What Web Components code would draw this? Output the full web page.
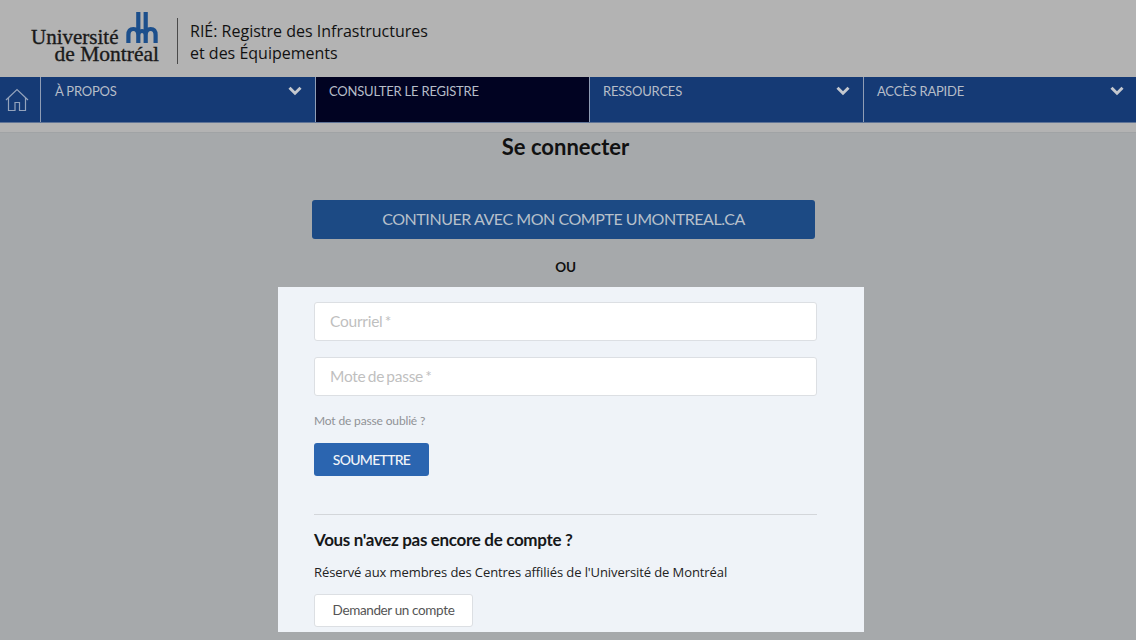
<!DOCTYPE html>
<html lang="fr">
<head>
<meta charset="utf-8">
<title>Se connecter</title>
<style>
    html, body { margin: 0; padding: 0; height: 640px; overflow: hidden; background: #a6a9ab; }
    body { font-family: "Lato", sans-serif; display: flex; flex-direction: column; }
</style>
</head>
<body>
<site-header></site-header>
<site-nav>
    <nav-item label="À PROPOS" caret></nav-item>
    <nav-item label="CONSULTER LE REGISTRE" active></nav-item>
    <nav-item label="RESSOURCES" caret></nav-item>
    <nav-item label="ACCÈS RAPIDE" caret></nav-item>
</site-nav>
<login-panel>
    <text-field label="Courriel *"></text-field>
    <text-field label="Mote de passe *"></text-field>
</login-panel>
<script>
class SiteHeader extends HTMLElement {
    constructor() {
        super();
        this.attachShadow({ mode: 'open' });
        this.shadowRoot.innerHTML = `
            <style>
                :host {
                    display: flex;
                    align-items: flex-start;
                    height: 77px;
                    background: #b3b3b3;
                    box-sizing: border-box;
                    padding: 12px 0 0 31px;
                }
                .logo {
                    display: flex;
                    flex-direction: column;
                    width: 128px;
                    height: 51px;
                    font-family: "Liberation Serif", serif;
                    color: #1a1a1a;
                    -webkit-text-stroke: 0.35px #1a1a1a;
                }
                .top { display: flex; align-items: flex-start; height: 33px; }
                .uni { font-size: 21px; line-height: 18px; margin-top: 16px; white-space: nowrap; }
                .top svg { margin-left: 8px; flex: none; }
                .mtl {
                    font-size: 21.5px;
                    line-height: 18px;
                    text-align: right;
                    white-space: nowrap;
                }
                .bar { width: 1px; height: 46px; background: #4a4a4a; margin: 6px 12px 0 18px; }
                .title {
                    font-family: "Open Sans", sans-serif;
                    font-size: 16px;
                    line-height: 22px;
                    color: #111;
                    margin-top: 8px;
                    white-space: nowrap;
                }
            </style>
            <div class="logo">
                <div class="top">
                    <span class="uni">Université</span>
                    <svg width="32" height="32" viewBox="0 0 32 32" fill="none" stroke="#1c4f8c" stroke-width="4.200">
                        <path d="M12.300 0v18M19.700 0v18"/>
                        <path d="M2.400 31V23q0-6 4.950-6t4.950 6V31M12.300 23q0-4 3.700-4t3.700 4V31M19.700 23q0-6 4.950-6t4.950 6V31"/>
                    </svg>
                </div>
                <div class="mtl">de Montréal</div>
            </div>
            <div class="bar"></div>
            <div class="title">RIÉ: Registre des Infrastructures<br>et des Équipements</div>
        `;
    }
}
customElements.define('site-header', SiteHeader);

class SiteNav extends HTMLElement {
    constructor() {
        super();
        this.attachShadow({ mode: 'open' });
        this.shadowRoot.innerHTML = `
            <style>
                :host {
                    display: block;
                    background: #b3b3b3;
                    height: 56px;
                    box-sizing: border-box;
                    border-bottom: 1px solid #a0a3a5;
                }
                .row {
                    display: grid;
                    grid-template-columns: 41px 275px 274px 274px 1fr;
                    height: 46px;
                    background: #153a75;
                    border-bottom: 1px solid #5f7497;
                    box-sizing: border-box;
                }
                .home {
                    border-right: 1px solid #8f9db5;
                    display: flex;
                    align-items: center;
                    padding-left: 5px;
                }
            </style>
            <div class="row">
                <div class="home">
                    <svg width="24" height="24" viewBox="0 0 24 24" fill="none" stroke="#94a3bc" stroke-width="1.200">
                        <path d="M1 12 12 1.500 23 12M3.500 10V22.500h6.500v-8h4.500v8H20.500V10"/>
                    </svg>
                </div>
                <slot></slot>
            </div>
        `;
    }
}
customElements.define('site-nav', SiteNav);

class NavItem extends HTMLElement {
    constructor() {
        super();
        this.attachShadow({ mode: 'open' });
        const caret = this.hasAttribute('caret') ? `
            <svg width="14" height="10" viewBox="0 0 14 10" fill="none" stroke="#c4c8cf" stroke-width="3"><path d="M1.500 1.800 7 7.200l5.500-5.400"/></svg>` : '';
        this.shadowRoot.innerHTML = `
            <style>
                :host {
                    display: flex;
                    justify-content: space-between;
                    box-sizing: border-box;
                    padding: 6px 13px 0 13px;
                    font-family: "Lato", sans-serif;
                    font-size: 13px;
                    letter-spacing: -0.2px;
                    line-height: 17px;
                    color: #b6bdc8;
                    border-right: 1px solid #8f9db5;
                }
                :host(:first-child) { padding-left: 14px; }
                :host(:last-child) { border-right: 0; padding-right: 12px; }
                :host([active]) { background: #010322; }
                svg { margin-top: 3px; }
            </style>
            <span>${this.getAttribute('label')}</span>${caret}
        `;
    }
}
customElements.define('nav-item', NavItem);

class TextField extends HTMLElement {
    constructor() {
        super();
        this.attachShadow({ mode: 'open' });
        this.shadowRoot.innerHTML = `
            <style>
                :host {
                    display: flex;
                    align-items: center;
                    box-sizing: border-box;
                    height: 39px;
                    padding: 0 0 2px 15px;
                    background: #fff;
                    border: 1px solid #dcdfe3;
                    border-radius: 3px;
                    font-size: 15.500px;
                    letter-spacing: -0.25px;
                    word-spacing: -1.500px;
                    color: #bfbfbf;
                    margin-bottom: 16px;
                }
            </style>
            <span>${this.getAttribute('label')}</span>
        `;
    }
}
customElements.define('text-field', TextField);

class LoginPanel extends HTMLElement {
    constructor() {
        super();
        this.attachShadow({ mode: 'open' });
        this.shadowRoot.innerHTML = `
            <style>
                :host {
                    display: flex;
                    flex-direction: column;
                    align-items: center;
                    padding-right: 5px;
                    font-family: "Lato", sans-serif;
                    color: #111;
                }
                h1 {
                    margin: 0;
                    font-size: 22px;
                    line-height: 28px;
                    font-weight: 700;
                }
                .sso {
                    box-sizing: border-box;
                    width: 503px;
                    height: 39px;
                    margin: 39px 4px 0 0;
                    background: #1c4a84;
                    border-radius: 3px;
                    color: #b7c0cb;
                    font-size: 16px;
                    letter-spacing: -0.45px;
                    line-height: 38px;
                    text-align: center;
                }
                .or { font-size: 13.500px; font-weight: 700; line-height: 17px; margin-top: 20px; letter-spacing: -0.1px; }
                .card {
                    box-sizing: border-box;
                    width: 586px;
                    height: 345px;
                    margin: 11px 0 0 11px;
                    background: #eff3f8;
                    padding: 15px 47px 0 36px;
                }
                .forgot { font-size: 12px; letter-spacing: -0.15px; line-height: 15px; color: #8f9296; margin-top: 17px; }
                .submit {
                    box-sizing: border-box;
                    width: 115px;
                    height: 33px;
                    margin-top: 15px;
                    background: #2b65b0;
                    border-radius: 3px;
                    color: #f1f4f8;
                    font-size: 14px;
                    letter-spacing: -0.7px;
                    font-weight: 500;
                    line-height: 33px;
                    text-align: center;
                }
                hr { border: 0; border-top: 1px solid #d3d6da; margin: 38px 0 0; }
                h2 { margin: 14px 0 0; font-size: 17px; letter-spacing: -0.33px; line-height: 22px; font-weight: 700; color: #16181a; }
                p {
                    margin: 12px 0 0;
                    font-family: "Open Sans", sans-serif;
                    font-size: 13px;
                    letter-spacing: -0.09px;
                    line-height: 18px;
                    color: #222;
                }
                .request {
                    box-sizing: border-box;
                    width: 159px;
                    height: 33px;
                    margin-top: 13px;
                    background: #fff;
                    border: 1px solid #dcdfe3;
                    border-radius: 3px;
                    color: #555;
                    font-size: 13.500px;
                    letter-spacing: -0.37px;
                    line-height: 31px;
                    text-align: center;
                }
            </style>
            <h1>Se connecter</h1>
            <div class="sso">CONTINUER AVEC MON COMPTE UMONTREAL.CA</div>
            <div class="or">OU</div>
            <div class="card">
                <slot></slot>
                <div class="forgot">Mot de passe oublié ?</div>
                <div class="submit">SOUMETTRE</div>
                <hr>
                <h2>Vous n'avez pas encore de compte ?</h2>
                <p>Réservé aux membres des Centres affiliés de l'Université de Montréal</p>
                <div class="request">Demander un compte</div>
            </div>
        `;
    }
}
customElements.define('login-panel', LoginPanel);
</script>
</body>
</html>
